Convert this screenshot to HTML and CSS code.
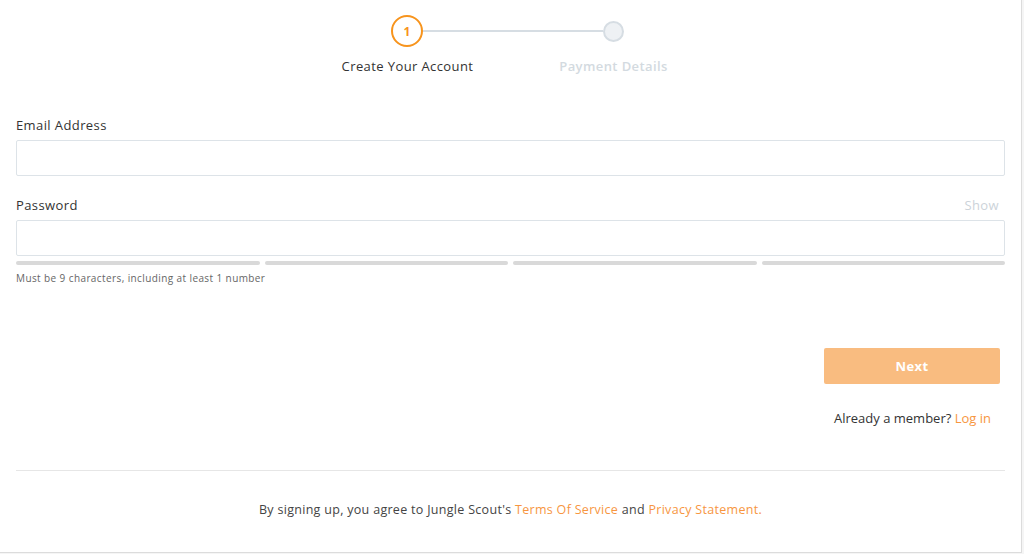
FILE: index.html
```html
<!DOCTYPE html>
<html>
<head>
<meta charset="utf-8">
<link rel="stylesheet" href="styles.css">
</head>
<body>
<div class="card">
  <div class="stepper">
    <div class="dots">
      <div class="dot active">1</div>
      <div class="step-line"></div>
      <div class="dot idle"></div>
    </div>
    <div class="labels">
      <div class="step-label">Create Your Account</div>
      <div class="step-label muted">Payment Details</div>
    </div>
  </div>

  <form class="form">
    <div class="field">
      <div class="label-row"><label class="label">Email Address</label></div>
      <input class="input" type="text">
    </div>
    <div class="field">
      <div class="label-row"><label class="label">Password</label><span class="show">Show</span></div>
      <input class="input" type="password">
      <div class="strength">
        <span class="seg"></span><span class="seg"></span><span class="seg"></span><span class="seg"></span>
      </div>
      <div class="hint">Must be 9 characters, including at least 1 number</div>
    </div>
    <div class="actions">
      <button class="next" type="button">Next</button>
    </div>
    <div class="member">Already a member? <a class="link">Log in</a></div>
  </form>

  <div class="footer">
    By signing up, you agree to Jungle Scout's <a class="link">Terms Of Service</a> and <a class="link">Privacy Statement.</a>
  </div>
</div>
</body>
</html>
```

FILE: styles.css
```css
html, body {
  margin: 0;
  padding: 0;
  background: #f5f5f5;
}
body {
  font-family: "Open Sans", "Liberation Sans", sans-serif;
  color: #333;
  width: 1024px;
  height: 554px;
  overflow: hidden;
  letter-spacing: 0.4px;
}
.card {
  width: 1021px;
  height: 552px;
  background: #fff;
  border-right: 1px solid #dcdcdc;
  border-bottom: 1px solid #dcdcdc;
  display: flex;
  flex-direction: column;
}
.stepper {
  display: flex;
  flex-direction: column;
  align-items: center;
  padding-top: 15px;
  height: 70px;
  box-sizing: border-box;
}
.dots {
  display: flex;
  align-items: center;
  height: 32px;
  margin-right: 6px;
}
.dot {
  border-radius: 50%;
  box-sizing: border-box;
  display: flex;
  align-items: center;
  justify-content: center;
  flex: none;
}
.dot.active {
  width: 32px;
  height: 32px;
  border: 2px solid #f7941d;
  color: #f7941d;
  font-size: 12px;
  font-weight: 700;
  letter-spacing: 0;
}
.dot.idle {
  width: 21px;
  height: 21px;
  border: 2px solid #d6dde3;
  background: #eef1f4;
}
.step-line {
  width: 180px;
  height: 2px;
  background: #d6dde3;
}
.labels {
  display: flex;
  margin-top: 10px;
}
.step-label {
  width: 206px;
  text-align: center;
  font-size: 13px;
  font-weight: 500;
  color: #333;
  white-space: nowrap;
}
.step-label.muted {
  color: #d3dae0;
  font-weight: 600;
}

.form {
  padding: 0 16px;
  margin-top: 44px;
  display: flex;
  flex-direction: column;
}
.field {
  display: flex;
  flex-direction: column;
  margin-bottom: 18px;
}
.label-row {
  display: flex;
  justify-content: space-between;
  align-items: center;
  height: 18px;
  margin-top: 2px;
  margin-bottom: 6px;
}
.label {
  font-size: 13px;
  font-weight: 500;
  color: #333;
}
.show {
  font-size: 13px;
  color: #ccd3d9;
  margin-right: 6px;
  font-weight: 500;
}
.input {
  height: 36px;
  box-sizing: border-box;
  border: 1px solid #dde3e8;
  border-radius: 2px;
  width: 100%;
  margin: 0;
  padding: 0 10px;
  font: inherit;
  outline: none;
}
.strength {
  display: flex;
  gap: 5px;
  margin-top: 5px;
}
.seg {
  flex: 1;
  height: 4px;
  border-radius: 2px;
  background: #d9d9d9;
}
.hint {
  margin-top: 6px;
  font-size: 10px;
  color: #666;
  letter-spacing: 0.4px;
}
.actions {
  display: flex;
  justify-content: flex-end;
  margin-top: 45px;
  padding-right: 5px;
}
.next {
  width: 176px;
  height: 36px;
  background: #f9bc80;
  color: #fff;
  border: none;
  border-radius: 2px;
  font-family: inherit;
  font-size: 13px;
  font-weight: 700;
  letter-spacing: 0.4px;
}
.member {
  text-align: right;
  font-size: 13px;
  color: #333;
  margin-top: 25px;
  padding-right: 14px;
  padding-bottom: 43px;
  border-bottom: 1px solid #e6e6e6;
  letter-spacing: 0;
}
.link {
  color: #f7963f;
}
.footer {
  text-align: center;
  font-size: 12.5px;
  color: #444;
  margin-top: 30px;
  letter-spacing: 0.3px;
}
```
